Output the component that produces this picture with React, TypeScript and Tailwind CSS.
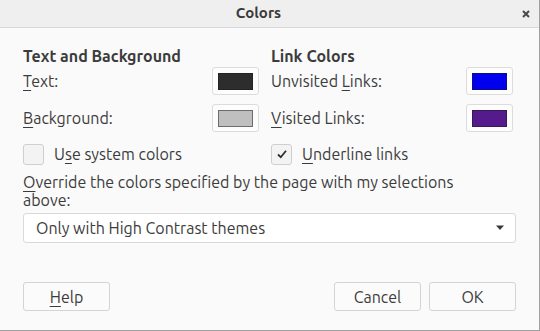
import React from "react";

const U = ({ children }: { children: React.ReactNode }) => (
  <span className="underline decoration-1 underline-offset-[3px]">{children}</span>
);

function Swatch({ color }: { color: string }) {
  return (
    <div className="flex h-[28px] w-[47px] items-center justify-center rounded-[3px] border border-[#dcdcdc] bg-[#fdfdfd]">
      <div className="h-[17px] w-[35px] border border-[#1a1a1a]/50" style={{ backgroundColor: color }} />
    </div>
  );
}

function Check({ checked }: { checked?: boolean }) {
  return (
    <div className="flex h-[21px] w-[21px] items-center justify-center rounded-[3px] border border-[#cfcfcf] bg-[#f3f3f3]">
      {checked && (
        <svg width="14" height="14" viewBox="0 0 14 14">
          <path d="M3 7.5 L5.8 10.2 L11 3.8" fill="none" stroke="#2e2e2e" strokeWidth="1.8" />
        </svg>
      )}
    </div>
  );
}

export default function App() {
  return (
    <div
      className="flex h-[331px] w-[540px] flex-col border-r border-b border-[#a0a0a0] bg-[#fafafa] text-[16px] text-[#3c3c3c]"
      style={{ fontFamily: "Ubuntu, 'Noto Sans', 'Open Sans', sans-serif" }}
    >
      <div className="relative flex h-[28px] shrink-0 items-center justify-center border-b border-[#d8d8d8] bg-[#efefef]">
        <span className="mr-[22px] text-[15px] font-bold text-[#3a3a3a]">Colors</span>
        <svg className="absolute right-[9px] top-[10px]" width="8" height="8" viewBox="0 0 8 8">
          <path d="M1 1 L7 7 M7 1 L1 7" stroke="#4a4a4a" strokeWidth="2" />
        </svg>
      </div>
      <div className="flex flex-1 flex-col px-[23px] pt-[18px]">
        <div className="grid grid-cols-[236px_242px] gap-x-[12px]">
          <div className="flex flex-col">
            <div className="h-[20px] leading-[20px] font-bold">Text and Background</div>
            <div className="mt-[1px] flex h-[28px] items-center justify-between">
              <span><U>T</U>ext:</span>
              <Swatch color="#2d2d2d" />
            </div>
            <div className="mt-[9px] flex h-[28px] items-center justify-between">
              <span><U>B</U>ackground:</span>
              <Swatch color="#bfbfbf" />
            </div>
            <div className="mt-[11px] flex h-[22px] items-center gap-[10px]">
              <Check />
              <span>U<U>s</U>e system colors</span>
            </div>
          </div>
          <div className="flex flex-col">
            <div className="h-[20px] leading-[20px] font-bold">Link Colors</div>
            <div className="mt-[1px] flex h-[28px] items-center justify-between">
              <span>Unvisited <U>L</U>inks:</span>
              <Swatch color="#0000ee" />
            </div>
            <div className="mt-[9px] flex h-[28px] items-center justify-between">
              <span><U>V</U>isited Links:</span>
              <Swatch color="#551a8b" />
            </div>
            <div className="mt-[11px] flex h-[22px] items-center gap-[10px]">
              <Check checked />
              <span><U>U</U>nderline links</span>
            </div>
          </div>
        </div>
        <div className="mt-[8px] w-[470px] leading-[18px] first-letter:underline first-letter:decoration-1 first-letter:underline-offset-[3px]">
          Override the colors specified by the page with my selections above:
        </div>
        <div className="mt-[4px] flex h-[30px] items-center justify-between rounded-[3px] border border-[#d9d9d9] bg-white pl-[12px] pr-[10px]">
          <span>Only with High Contrast themes</span>
          <svg width="10" height="6" viewBox="0 0 10 6">
            <path d="M1 0.5 L9 0.5 L5 5 Z" fill="#3a3a3a" />
          </svg>
        </div>
        <div className="mt-[39px] flex items-center justify-between">
          <button className="h-[29px] w-[87px] rounded-[3px] border border-[#d4d4d4] bg-[#fbfbfb]">
            <U>H</U>elp
          </button>
          <div className="flex gap-[8px]">
            <button className="h-[29px] w-[87px] rounded-[3px] border border-[#d4d4d4] bg-[#fbfbfb]">Cancel</button>
            <button className="h-[29px] w-[87px] rounded-[3px] border border-[#d4d4d4] bg-[#fbfbfb]">OK</button>
          </div>
        </div>
      </div>
    </div>
  );
}
